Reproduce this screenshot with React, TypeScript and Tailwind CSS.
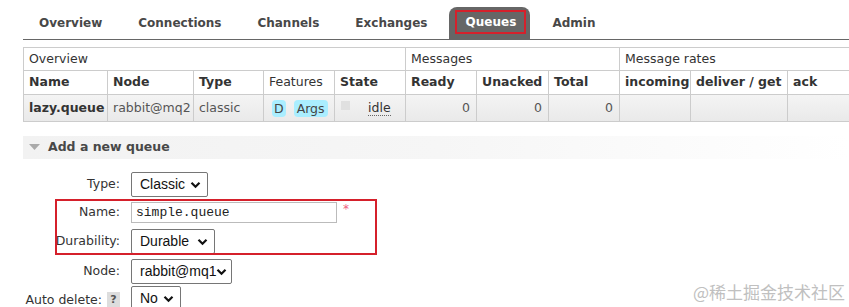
const TABS = ["Overview", "Connections", "Channels", "Exchanges", "Queues", "Admin"];

const verdana = "font-['DejaVu_Sans',Verdana,sans-serif]";

function Chevron() {
  return (
    <svg width="11" height="8" viewBox="0 0 11 8" className="shrink-0">
      <path d="M1.5 1.8 L5.5 5.8 L9.5 1.8" fill="none" stroke="#111" strokeWidth="2.2" />
    </svg>
  );
}

function FakeSelect({ value, width }: { value: string; width: string }) {
  return (
    <div
      className={`${width} h-[25px] flex items-center justify-between pl-[8px] pr-[6px] border border-[#767676] rounded-[2px] bg-white font-['Liberation_Sans',Arial,sans-serif] text-[14px] text-[#111]`}
    >
      <span>{value}</span>
      <Chevron />
    </div>
  );
}

function Row({ label, height, children }: { label: React.ReactNode; height: string; children: React.ReactNode }) {
  return (
    <div className={`flex items-center gap-[11px] ${height}`}>
      <div className={`${verdana} w-[120px] text-[12.5px] text-[#333] flex justify-end items-center gap-[5px]`}>{label}</div>
      {children}
    </div>
  );
}

export default function App() {
  return (
    <div className={`w-[849px] h-[307px] overflow-hidden bg-white relative ${verdana}`}>
      {/* tabs */}
      <div className="ml-[23px] mt-[7px] flex items-end border-b border-[#666] h-[33px]">
        {TABS.map((t, i) => (
          <div
            key={t}
            className={
              t === "Queues"
                ? "ml-[4px] mr-[4px] h-[32px] pl-[6px] pr-[4px] pt-[3px] bg-[#666] rounded-t-[8px] flex items-start"
                : `h-[32px] flex items-center ${i === 0 ? "pl-[16px]" : "pl-[18px]"} pr-[18px] text-[12px] font-bold text-[#484848]`
            }
          >
            {t === "Queues" ? (
              <span className="border-2 border-[#d5202b] w-[71px] h-[24px] flex items-center justify-center text-[12px] font-bold text-white">
                Queues
              </span>
            ) : (
              t
            )}
          </div>
        ))}
      </div>

      {/* queues table */}
      <table className="ml-[23px] mt-[7px] w-[826px] border-collapse table-fixed text-[12.5px] text-[#333]">
        <colgroup>
          <col className="w-[84px]" />
          <col className="w-[86px]" />
          <col className="w-[70px]" />
          <col className="w-[71px]" />
          <col className="w-[71px]" />
          <col className="w-[71px]" />
          <col className="w-[72px]" />
          <col className="w-[71px]" />
          <col className="w-[71px]" />
          <col className="w-[97px]" />
          <col className="w-[62px]" />
        </colgroup>
        <thead>
          <tr className="h-[23px]">
            <th colSpan={5} className="border border-[#ccc] font-normal text-left px-[5px]">Overview</th>
            <th colSpan={3} className="border border-[#ccc] font-normal text-left px-[5px]">Messages</th>
            <th colSpan={3} className="border border-[#ccc] border-r-0 font-normal text-left px-[5px]">Message rates</th>
          </tr>
          <tr className="h-[24px]">
            {["Name", "Node", "Type"].map((h) => (
              <th key={h} className="border border-[#ccc] text-left px-[5px] font-bold">{h}</th>
            ))}
            <th className="border border-[#ccc] text-left px-[5px] font-normal">Features</th>
            {["State", "Ready", "Unacked", "Total", "incoming", "deliver / get"].map((h) => (
              <th key={h} className="border border-[#ccc] text-left px-[5px] font-bold whitespace-nowrap">{h}</th>
            ))}
            <th className="border border-[#ccc] border-r-0 text-left px-[5px] font-bold">ack</th>
          </tr>
        </thead>
        <tbody>
          <tr className="h-[27px] bg-gradient-to-b from-[#f4f4f4] to-[#e9e9e9]">
            <td className="border border-[#ccc] px-[5px] font-bold">lazy.queue</td>
            <td className="border border-[#ccc] px-[5px] text-[#555]">rabbit@mq2</td>
            <td className="border border-[#ccc] px-[5px] text-[#555]">classic</td>
            <td className="border border-[#ccc] px-[8px]">
              <div className="flex gap-[8px]">
                <span className="bg-[#aaeeff] rounded-[4px] px-[2px] h-[17px] leading-[17px] text-[#444]">D</span>
                <span className="bg-[#aaeeff] rounded-[4px] px-[3px] h-[17px] leading-[17px] text-[#444]">Args</span>
              </div>
            </td>
            <td className="border border-[#ccc] px-[6px]">
              <div className="flex items-center">
                <span className="w-[9px] h-[9px] bg-[#e0e0e0] mb-[6px]" />
                <span className="ml-[18px] text-[#333] border-b border-dotted border-[#666] leading-[15px]">idle</span>
              </div>
            </td>
            <td className="border border-[#ccc] px-[6px] text-right text-[#555]">0</td>
            <td className="border border-[#ccc] px-[6px] text-right text-[#555]">0</td>
            <td className="border border-[#ccc] px-[6px] text-right text-[#555]">0</td>
            <td className="border border-[#ccc]" />
            <td className="border border-[#ccc]" />
            <td className="border border-[#ccc] border-r-0" />
          </tr>
        </tbody>
      </table>

      {/* add a new queue */}
      <div className="ml-[23px] mt-[14px] h-[23px] flex items-center bg-gradient-to-r from-[#f2f2f2] via-[#f6f6f6] to-white">
        <svg width="11" height="7" viewBox="0 0 11 7" className="ml-[6px]">
          <path d="M0 0 L11 0 L5.5 6 Z" fill="#aaa" />
        </svg>
        <span className="ml-[8px] text-[12.5px] font-bold text-[#484848]">Add a new queue</span>
      </div>

      <div className="relative mt-[13px] flex flex-col">
        <Row label="Type:" height="h-[25px]">
          <FakeSelect value="Classic" width="w-[77px]" />
        </Row>
        <div className="mt-[5px]">
          <Row label="Name:" height="h-[21px]">
            <div className="flex items-center">
              <div className="w-[206px] h-[21px] border border-[#bbb] bg-white flex items-center px-[4px] font-['Liberation_Mono',monospace] text-[13px] text-[#222]">
                simple.queue
              </div>
              <span className="ml-[6px] mb-[8px] text-[#f06080] text-[12px]">*</span>
            </div>
          </Row>
        </div>
        <div className="mt-[6px]">
          <Row label="Durability:" height="h-[25px]">
            <FakeSelect value="Durable" width="w-[84px]" />
          </Row>
        </div>
        <div className="mt-[5px]">
          <Row label="Node:" height="h-[25px]">
            <FakeSelect value="rabbit@mq1" width="w-[101px]" />
          </Row>
        </div>
        <div className="mt-[2px]">
          <Row
            label={
              <>
                <span className="pt-[4px]">Auto delete:</span>
                <span className="mt-[4px] bg-[#ddd] w-[13px] h-[17px] flex items-center justify-center text-[11px] font-bold text-[#555]">?</span>
              </>
            }
            height="h-[25px]"
          >
            <FakeSelect value="No" width="w-[50px]" />
          </Row>
        </div>

        {/* annotation box */}
        <div className="absolute left-[55px] top-[27px] w-[322px] h-[56px] border-2 border-[#d5202b] pointer-events-none" />
      </div>

      <div className="absolute right-[4px] bottom-[3px] font-['Noto_Sans_CJK_SC',sans-serif] text-[17px] text-[#c0c0c0]">
        @稀土掘金技术社区
      </div>
    </div>
  );
}
